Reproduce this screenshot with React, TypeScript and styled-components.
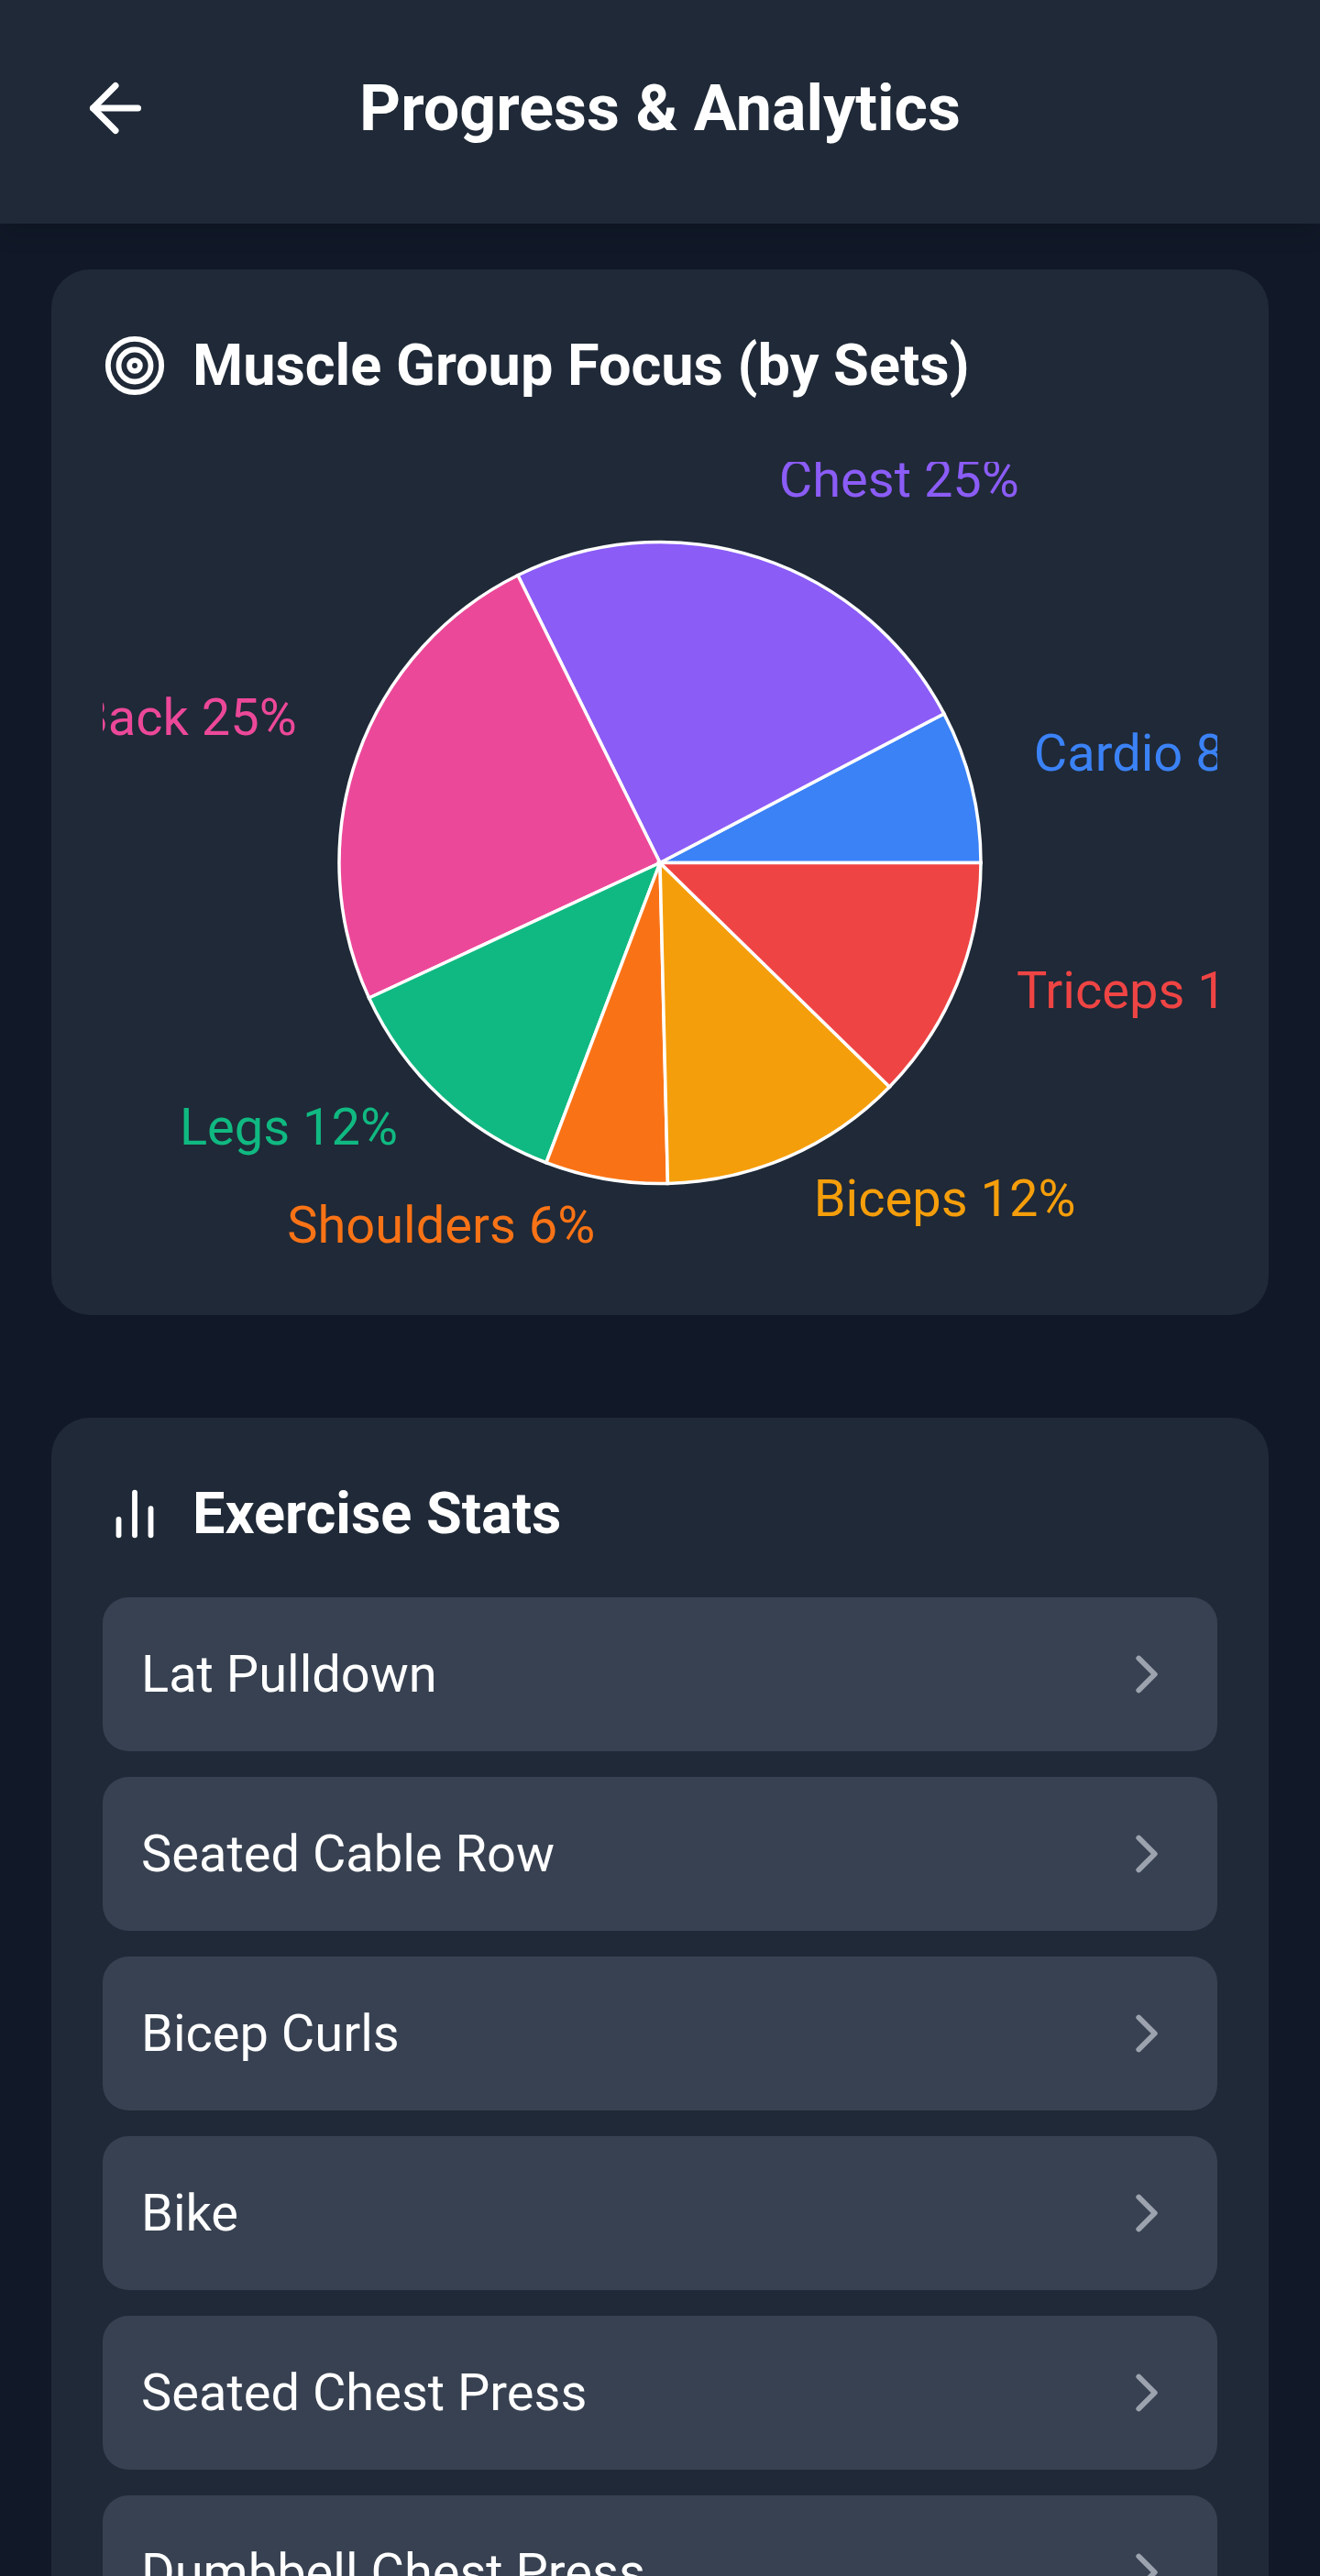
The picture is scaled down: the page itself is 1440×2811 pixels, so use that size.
import { ArrowLeft, ChevronRight, Target } from "lucide-react";
import styled, { createGlobalStyle } from "styled-components";

const GlobalStyle = createGlobalStyle`
  html, body {
    margin: 0;
    height: 100%;
    overflow: hidden;
    background: #111827;
  }
  * {
    box-sizing: border-box;
  }
`;

const Page = styled.div`
  height: 100vh;
  overflow: hidden;
  background: #111827;
  color: #fff;
  font-family: Roboto, "Liberation Sans", sans-serif;
`;

const Header = styled.header`
  height: 244px;
  padding: 76px 84px 0;
  display: grid;
  grid-template-columns: 1fr auto 1fr;
  align-items: start;
  background: #1f2937;
  box-shadow: 0 14px 21px rgba(0, 0, 0, 0.1);
`;

const BackButton = styled.div`
  height: 84px;
  color: #fff;
`;

const PageTitle = styled.h1`
  margin: 0;
  font-size: 70px;
  line-height: 84px;
  font-weight: 700;
`;

const Main = styled.main`
  padding: 50px 56px 0;
  display: flex;
  flex-direction: column;
  gap: 112px;
`;

const Card = styled.section`
  padding: 56px;
  background: #1f2937;
  border-radius: 42px;
`;

const CardTitle = styled.h2<{ $spacing: number }>`
  margin: 0 0 ${(props) => props.$spacing}px;
  height: 98px;
  display: flex;
  align-items: center;
  gap: 28px;
  font-size: 63px;
  line-height: 98px;
  font-weight: 700;
`;

const ChartSvg = styled.svg`
  display: block;
  width: 1216px;
  height: 875px;
`;

const SliceLabel = styled.text`
  font-size: 56px;
`;

const ExerciseList = styled.div`
  display: flex;
  flex-direction: column;
  gap: 28px;
`;

const ExerciseRow = styled.div`
  height: 168px;
  padding: 0 42px;
  display: flex;
  align-items: center;
  justify-content: space-between;
  background: #374151;
  border-radius: 28px;
  font-size: 56px;
  color: #fff;
`;

const Chevron = styled(ChevronRight)`
  color: #9ca3af;
  flex-shrink: 0;
`;

const muscleData = [
  { name: "Cardio", sets: 5, color: "#3b82f6" },
  { name: "Chest", sets: 16, color: "#8b5cf6" },
  { name: "Back", sets: 16, color: "#ec4899" },
  { name: "Legs", sets: 8, color: "#10b981" },
  { name: "Shoulders", sets: 4, color: "#f97316" },
  { name: "Biceps", sets: 8, color: "#f59e0b" },
  { name: "Triceps", sets: 8, color: "#ef4444" },
];

const exercises = [
  "Lat Pulldown",
  "Seated Cable Row",
  "Bicep Curls",
  "Bike",
  "Seated Chest Press",
  "Dumbbell Chest Press",
];

const CX = 608;
const CY = 437.5;
const RADIUS = 350;
const LABEL_RADIUS = 420;

const polar = (radius: number, deg: number) => ({
  x: CX + radius * Math.cos((deg * Math.PI) / 180),
  y: CY - radius * Math.sin((deg * Math.PI) / 180),
});

function MusclePie() {
  const total = muscleData.reduce((sum, d) => sum + d.sets, 0);
  let angle = 0;
  const slices = muscleData.map((d) => {
    const start = angle;
    const sweep = (d.sets / total) * 360;
    angle += sweep;
    const a = polar(RADIUS, start);
    const b = polar(RADIUS, start + sweep);
    const label = polar(LABEL_RADIUS, start + sweep / 2);
    return {
      ...d,
      path: `M${CX} ${CY}L${a.x} ${a.y}A${RADIUS} ${RADIUS} 0 0 0 ${b.x} ${b.y}Z`,
      label,
      percent: Math.round((d.sets / total) * 100),
    };
  });

  return (
    <ChartSvg viewBox="0 0 1216 875">
      {slices.map((s) => (
        <path key={s.name} d={s.path} fill={s.color} stroke="#fff" strokeWidth={3.5} />
      ))}
      {slices.map((s) => (
        <SliceLabel
          key={s.name}
          x={s.label.x}
          y={s.label.y}
          fill={s.color}
          textAnchor={s.label.x > CX ? "start" : "end"}
        >
          {s.name} {s.percent}%
        </SliceLabel>
      ))}
    </ChartSvg>
  );
}

function App() {
  return (
    <Page>
      <GlobalStyle />
      <Header>
        <BackButton>
          <ArrowLeft size={84} />
        </BackButton>
        <PageTitle>Progress &amp; Analytics</PageTitle>
      </Header>
      <Main>
        <Card>
          <CardTitle $spacing={56}>
            <Target size={70} />
            Muscle Group Focus (by Sets)
          </CardTitle>
          <MusclePie />
        </Card>
        <Card>
          <CardTitle $spacing={42}>
            <svg
              width={70}
              height={70}
              viewBox="0 0 24 24"
              fill="none"
              stroke="currentColor"
              strokeWidth={2}
              strokeLinecap="round"
              strokeLinejoin="round"
            >
              <path d="M18 20V10" />
              <path d="M12 20V4" />
              <path d="M6 20v-6" />
            </svg>
            Exercise Stats
          </CardTitle>
          <ExerciseList>
            {exercises.map((name) => (
              <ExerciseRow key={name}>
                {name}
                <Chevron size={70} />
              </ExerciseRow>
            ))}
          </ExerciseList>
        </Card>
      </Main>
    </Page>
  );
}

export default App;
